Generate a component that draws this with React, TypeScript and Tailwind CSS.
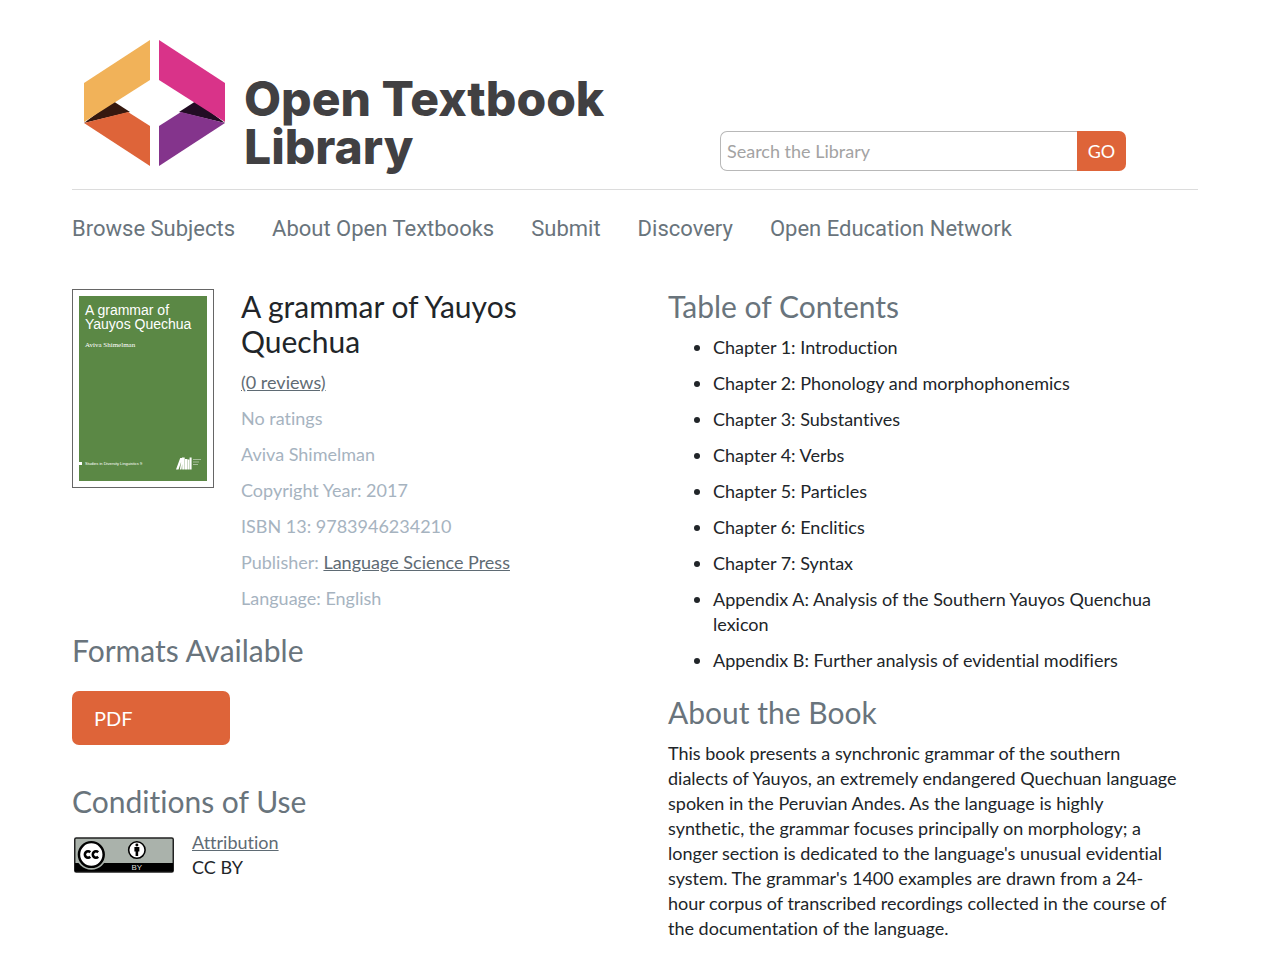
import React, { useState } from 'react';

const navLinks = [
  'Browse Subjects',
  'About Open Textbooks',
  'Submit',
  'Discovery',
  'Open Education Network',
];

const chapters = [
  'Chapter 1: Introduction',
  'Chapter 2: Phonology and morphophonemics',
  'Chapter 3: Substantives',
  'Chapter 4: Verbs',
  'Chapter 5: Particles',
  'Chapter 6: Enclitics',
  'Chapter 7: Syntax',
  'Appendix A: Analysis of the Southern Yauyos Quenchua lexicon',
  'Appendix B: Further analysis of evidential modifiers',
];

const LogoMark = () => (
  <svg width="142" height="128" viewBox="0 0 142 128" aria-hidden="true">
    <polygon points="0,84 29,62 46,73" fill="#35180f" />
    <polygon points="141,84 112,62 95,73" fill="#220c24" />
    <polygon points="0,84 44,73 66,87 66,127" fill="#de6439" />
    <polygon points="141,84 97,73 75,87 75,127" fill="#84348c" />
    <polygon points="0,44 66,1 66,41 0,83" fill="#f1b259" />
    <polygon points="75,1 141,44 141,83 75,41" fill="#d93389" />
  </svg>
);

const BookCover = () => (
  <div className="w-[142px] h-[199px] shrink-0 border border-[#666] p-[6px] bg-white">
    <div className="h-full bg-[#5b8845] text-white flex flex-col">
      <div className="px-[6px] pt-[7px] font-['Liberation_Sans',sans-serif] text-[14px] leading-[14px] whitespace-nowrap">
        A grammar of
        <br />
        Yauyos Quechua
      </div>
      <div className="px-[6px] pt-[10px] font-['Liberation_Serif',serif] text-[7px] leading-[9px]">
        Aviva Shimelman
      </div>
      <div className="mt-auto mb-[11px] flex items-center">
        <span className="w-[3px] h-[3px] bg-white mr-[3px]"></span>
        <span className="font-['Liberation_Sans',sans-serif] text-[4px] leading-[6px] whitespace-nowrap">
          Studies in Diversity Linguistics 9
        </span>
        <svg className="ml-auto mr-[5px]" width="26" height="13" viewBox="0 0 26 13" aria-hidden="true">
          <path d="M0 12.500 4.200 1h2.300L2.500 12.500zM3.800 12.500 6 0.500h2.700v12H6.200V7L5.500 12.500zM9 2h2.400v10.500H9zM11.700 2.500h1.600v10h-1.600zM13.600 0.500h2v12h-2z" fill="#fff" />
          <path d="M17 2.500h8M17 5h6M17 7.500h5" stroke="#b9ccae" strokeWidth="0.8" />
        </svg>
      </div>
    </div>
  </div>
);

const LicenseBadge = () => (
  <svg width="100" height="36" viewBox="0 0 101 36" role="img" aria-label="Creative Commons Attribution">
    <rect x="0.75" y="0.75" width="99.500" height="34.500" rx="1.500" fill="#aab2ab" stroke="#222" strokeWidth="1.500" />
    <path d="M1 26h99v9H1z" fill="#000" />
    <circle cx="17.500" cy="17.500" r="15.500" fill="#aab2ab" />
    <circle cx="17.500" cy="17.500" r="12.500" fill="#fff" stroke="#000" strokeWidth="2.500" />
    <path d="M16.400 15.200a3.200 3.200 0 1 0 0 4.600M24.400 15.200a3.200 3.200 0 1 0 0 4.600" fill="none" stroke="#000" strokeWidth="2.600" />
    <circle cx="63.500" cy="13" r="8.300" fill="#fff" stroke="#000" strokeWidth="1.600" />
    <circle cx="63.500" cy="7.800" r="1.500" fill="#000" />
    <path d="M61 10h5v4.500h-1.200v4.500h-2.600v-4.500H61z" fill="#000" />
    <text x="58" y="33.500" fill="#ddd" fontSize="8" fontFamily="Liberation Sans, sans-serif">
      BY
    </text>
  </svg>
);

const SectionHeading = ({ children }: { children: React.ReactNode }) => (
  <h2 className="text-[30px] leading-[35px] text-[#69747c]">{children}</h2>
);

export default function App() {
  const [query, setQuery] = useState('');

  return (
    <div className="min-h-screen bg-white pl-[72px] pr-[82px] pt-[39px] pb-5 font-['Lato',sans-serif] [font-variant-ligatures:none] text-[18px] leading-[25px] text-[#212529]">
      {/* Header */}
      <header>
        <div className="flex items-end justify-between border-b border-[#dcdcdc] pb-[18px]">
          <a href="#" className="flex pl-3 text-[#414042]">
            <LogoMark />
            <span className="ml-[18px] pt-9 font-['Inter',sans-serif] font-extrabold text-[48px] leading-[48px] whitespace-nowrap">
              Open Textbook
              <br />
              Library
            </span>
          </a>
          <form className="flex h-10 w-[406px] mr-[72px]" onSubmit={(e) => e.preventDefault()}>
            <input
              type="text"
              aria-label="Search the Library"
              placeholder="Search the Library"
              value={query}
              onChange={(e) => setQuery(e.target.value)}
              className="min-w-0 flex-1 rounded-l-[7px] border border-r-0 border-[#b8b8b8] px-[6px] placeholder:text-[#a3a3a3]"
            />
            <button type="submit" className="w-[49px] rounded-r-[7px] bg-[#de6439] text-white">
              GO
            </button>
          </form>
        </div>

        <nav className="flex flex-wrap gap-x-[37px] pt-[26px] font-['Roboto',sans-serif] text-[22px] leading-[26px] text-[#69747c]">
          {navLinks.map((link) => (
            <a key={link} href="#">
              {link}
            </a>
          ))}
        </nav>
      </header>

      <main className="mt-[47px] grid grid-cols-2 gap-x-[66px]">
        {/* Book details */}
        <div>
          <div className="flex gap-[27px]">
            <BookCover />
            <div className="flex flex-col gap-[11px] text-[#a6b3bf]">
              <h1 className="text-[30px] leading-[35px] text-[#212529]">A grammar of Yauyos Quechua</h1>
              <p>
                <a href="#" className="text-[#5f6b74] underline">
                  (0 reviews)
                </a>
              </p>
              <p>No ratings</p>
              <p>Aviva Shimelman</p>
              <p>Copyright Year: 2017</p>
              <p>ISBN 13: 9783946234210</p>
              <p>
                Publisher:{' '}
                <a href="#" className="text-[#5f6b74] underline">
                  Language Science Press
                </a>
              </p>
              <p>Language: English</p>
            </div>
          </div>

          <section className="mt-[22px]">
            <SectionHeading>Formats Available</SectionHeading>
            <a
              href="#"
              className="mt-[23px] flex h-[54px] w-[158px] items-center rounded-[7px] bg-[#de6439] px-[22px] text-[20px] text-white"
            >
              PDF
            </a>
          </section>

          <section className="mt-[39px]">
            <SectionHeading>Conditions of Use</SectionHeading>
            <div className="mt-[11px] flex items-center gap-[18px] pl-[2px]">
              <LicenseBadge />
              <p>
                <a href="#" className="text-[#5f6b74] underline">
                  Attribution
                </a>
                <br />
                CC BY
              </p>
            </div>
          </section>
        </div>

        {/* Contents and description */}
        <div>
          <section>
            <SectionHeading>Table of Contents</SectionHeading>
            <ul className="mt-[11px] list-disc space-y-[11px] pl-[45px]">
              {chapters.map((chapter) => (
                <li key={chapter}>{chapter}</li>
              ))}
            </ul>
          </section>

          <section className="mt-[22px]">
            <SectionHeading>About the Book</SectionHeading>
            <p className="mt-[11px]">
              This book presents a synchronic grammar of the southern <br />
              dialects of Yauyos, an extremely endangered Quechuan language <br />
              spoken in the Peruvian Andes. As the language is highly <br />
              synthetic, the grammar focuses principally on morphology; a <br />
              longer section is dedicated to the language's unusual evidential <br />
              system. The grammar's 1400 examples are drawn from a 24-
              <br />
              hour corpus of transcribed recordings collected in the course of <br />
              the documentation of the language.
            </p>
          </section>
        </div>
      </main>
    </div>
  );
}
